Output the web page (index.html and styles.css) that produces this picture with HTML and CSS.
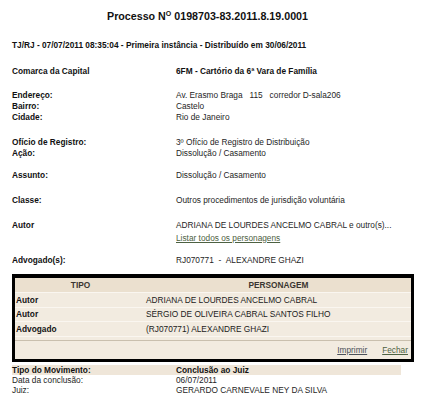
FILE: index.html
```html
<!DOCTYPE html>
<html lang="pt-BR">
<head>
<meta charset="utf-8">
<title>Processo</title>
<link rel="stylesheet" href="styles.css">
</head>
<body>
<div class="page">
  <h1 class="title">Processo N<span class="sup">O</span> 0198703-83.2011.8.19.0001</h1>
  <div class="subtitle">TJ/RJ - 07/07/2011 08:35:04 - Primeira instância - Distribuído em 30/06/2011</div>

  <div class="group g-comarca">
    <div class="row"><span class="label">Comarca da Capital</span><span class="value strong">6FM - Cartório da 6ª Vara de Família</span></div>
  </div>

  <div class="group g-end">
    <div class="row"><span class="label">Endereço:</span><span class="value">Av. Erasmo Braga&nbsp;&nbsp; 115 &nbsp; corredor D-sala206</span></div>
    <div class="row"><span class="label">Bairro:</span><span class="value">Castelo</span></div>
    <div class="row"><span class="label">Cidade:</span><span class="value">Rio de Janeiro</span></div>
  </div>

  <div class="group g-oficio">
    <div class="row"><span class="label">Ofício de Registro:</span><span class="value">3º Ofício de Registro de Distribuição</span></div>
    <div class="row"><span class="label">Ação:</span><span class="value">Dissolução / Casamento</span></div>
  </div>

  <div class="group g-assunto">
    <div class="row"><span class="label">Assunto:</span><span class="value">Dissolução / Casamento</span></div>
  </div>

  <div class="group g-classe">
    <div class="row"><span class="label">Classe:</span><span class="value">Outros procedimentos de jurisdição voluntária</span></div>
  </div>

  <div class="group g-autor">
    <div class="row"><span class="label">Autor</span><span class="value">ADRIANA DE LOURDES ANCELMO CABRAL e outro(s)...</span></div>
    <div class="row row-link"><span class="label"></span><span class="value"><a class="link" href="#">Listar todos os personagens</a></span></div>
  </div>

  <div class="group g-adv">
    <div class="row"><span class="label">Advogado(s):</span><span class="value">RJ070771&nbsp; - &nbsp;ALEXANDRE GHAZI</span></div>
  </div>

  <div class="box">
    <div class="brow bhead"><span class="c1">TIPO</span><span class="c2">PERSONAGEM</span></div>
    <div class="brow"><span class="c1">Autor</span><span class="c2">ADRIANA DE LOURDES ANCELMO CABRAL</span></div>
    <div class="brow"><span class="c1">Autor</span><span class="c2">SÉRGIO DE OLIVEIRA CABRAL SANTOS FILHO</span></div>
    <div class="brow"><span class="c1">Advogado</span><span class="c2">(RJ070771) ALEXANDRE GHAZI</span></div>
    <div class="bspacer"></div>
    <div class="bfoot"><a class="link link-print" href="#">Imprimir</a><a class="link" href="#">Fechar</a></div>
  </div>

  <div class="mov">
    <div class="mrow mhead"><span class="label">Tipo do Movimento:</span><span class="value strong">Conclusão ao Juiz</span></div>
    <div class="mrow"><span class="mlabel">Data da conclusão:</span><span class="value">06/07/2011</span></div>
    <div class="mrow"><span class="mlabel">Juiz:</span><span class="value">GERARDO CARNEVALE NEY DA SILVA</span></div>
  </div>
</div>
</body>
</html>
```

FILE: styles.css
```css
html, body {
  margin: 0;
  padding: 0;
  background: #ffffff;
}

body {
  font-family: "Liberation Sans", Arial, sans-serif;
  font-size: 8.3px;
  color: #1a1a1a;
}

.page {
  width: 402px;
  padding: 9px 0 0 12px;
}

.title {
  margin: 0;
  font-size: 10.7px;
  line-height: 14px;
  font-weight: bold;
  text-align: center;
  color: #111;
  width: 391px;
}

.sup {
  font-size: 7px;
  position: relative;
  top: -4px;
}

.subtitle {
  margin-top: 15px;
  line-height: 11px;
  font-weight: bold;
  color: #111;
}

.group .row {
  display: grid;
  grid-template-columns: 164px 1fr;
  line-height: 11px;
}

.label {
  font-weight: bold;
  color: #111;
}

.value {
  color: #1e1e1e;
  white-space: nowrap;
}

.strong {
  font-weight: bold;
  color: #111;
}

.g-comarca { margin-top: 14.5px; }
.g-end { margin-top: 13px; }
.g-oficio { margin-top: 14px; }
.g-assunto { margin-top: 11px; }
.g-classe { margin-top: 14px; }
.g-autor { margin-top: 14px; }
.g-adv { margin-top: 11px; }

.row-link { margin-top: 2px; }

.link {
  color: #4d6142;
  text-decoration: underline;
}

.box {
  margin-top: 8.5px;
  width: 396px;
  border: 3px solid #000;
  border-top-width: 4px;
  background: #f2ebe0;
  display: flex;
  flex-direction: column;
}

.brow {
  display: grid;
  grid-template-columns: 131px 1fr;
  height: 14.5px;
  align-items: center;
  color: #141414;
  border-bottom: 1px solid #faf6f0;
  box-sizing: border-box;
}

.brow .c1 {
  padding-left: 1px;
  font-weight: bold;
}

.brow .c2 {
  color: #1a1a1a;
}

.bhead {
  height: 15px;
  background: #ebe0cf;
}

.bhead .c1,
.bhead .c2 {
  text-align: center;
  padding-left: 0;
  font-weight: bold;
  color: #3a3530;
}

.bspacer {
  height: 3.5px;
  border-bottom: 1px solid #c9bfae;
}

.bfoot {
  height: 18px;
  display: flex;
  justify-content: flex-end;
  align-items: flex-end;
  gap: 15px;
  padding: 0 3px 3px 0;
  box-sizing: border-box;
  line-height: 11px;
}

.link-print { color: #4a5058; }

.mov {
  margin-top: 3px;
}

.mrow {
  display: grid;
  grid-template-columns: 164px 1fr;
  line-height: 10px;
  height: 10px;
}

.mhead {
  background: #efe6d9;
  width: 389px;
}

.mlabel {
  color: #1e1e1e;
}
```
